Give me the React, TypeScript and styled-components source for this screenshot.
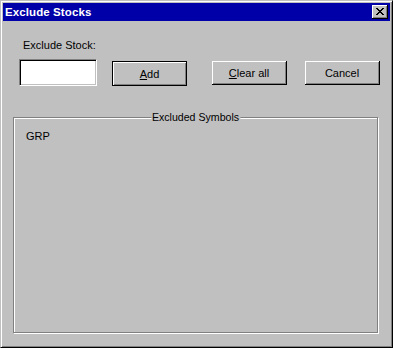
import React, { useState } from 'react';
import styled, { createGlobalStyle } from 'styled-components';

const GlobalStyle = createGlobalStyle`
  html, body {
    margin: 0;
    padding: 0;
    background: #000000;
  }
  body {
    font-family: "Liberation Sans", Arial, sans-serif;
    font-size: 11px;
  }
`;

// Win95 style window frame
const Window = styled.div`
  box-sizing: border-box;
  width: 393px;
  height: 348px;
  display: flex;
  flex-direction: column;
  background: #c0c0c0;
  border-top: 1px solid #c0c0c0;
  border-left: 1px solid #c0c0c0;
  border-right: 1px solid #000000;
  border-bottom: 1px solid #000000;
  box-shadow: inset 1px 1px 0 #ffffff, inset -1px -1px 0 #808080;
  padding: 2px;
`;

const TitleBar = styled.div`
  height: 18px;
  background: #0000a8;
  display: flex;
  align-items: center;
  justify-content: space-between;
  padding: 0 2px 0 2px;
`;

const Title = styled.span`
  color: #ffffff;
  font-family: "Liberation Sans", Arial, sans-serif;
  font-weight: bold;
  font-size: 11.5px;
  letter-spacing: 0.1px;
`;

const CloseButton = styled.button`
  box-sizing: border-box;
  width: 16px;
  height: 14px;
  padding: 0;
  background: #c0c0c0;
  border: none;
  border-right: 1px solid #000000;
  border-bottom: 1px solid #000000;
  box-shadow: inset 1px 1px 0 #ffffff, inset -1px -1px 0 #808080;
  display: flex;
  align-items: center;
  justify-content: center;
`;

const Body = styled.div`
  flex: 1;
  display: flex;
  flex-direction: column;
`;

const Label = styled.div`
  margin: 18px 0 0 20px;
  line-height: 13px;
  color: #000000;
`;

const ControlRow = styled.div`
  display: flex;
  align-items: flex-start;
  margin: 7px 0 0 16px;
`;

const TextInput = styled.input`
  box-sizing: border-box;
  width: 78px;
  height: 27px;
  margin: 0;
  padding: 2px 4px;
  background: #ffffff;
  border-top: 1px solid #808080;
  border-left: 1px solid #808080;
  border-right: 1px solid #ffffff;
  border-bottom: 1px solid #ffffff;
  box-shadow: inset 1px 1px 0 #000000, inset -1px -1px 0 #c0c0c0;
  font-family: "Liberation Sans", Arial, sans-serif;
  font-size: 11px;
  outline: none;
`;

const Button = styled.button<{ $offset: number; $default?: boolean }>`
  box-sizing: border-box;
  width: 75px;
  height: ${p => (p.$default ? 25 : 24)}px;
  margin: 2px 0 0 ${p => p.$offset}px;
  padding: 0;
  background: #c0c0c0;
  color: #000000;
  font-family: "Liberation Sans", Arial, sans-serif;
  font-size: 11px;
  border: ${p => (p.$default ? '1px solid #000000' : 'none')};
  border-right: 1px solid #000000;
  border-bottom: 1px solid #000000;
  box-shadow: inset 1px 1px 0 #ffffff, inset -1px -1px 0 #808080;
  display: flex;
  align-items: center;
  justify-content: center;
`;

const Mnemonic = styled.span`
  text-decoration: underline;
`;

const Group = styled.div`
  position: relative;
  box-sizing: border-box;
  width: 365px;
  height: 216px;
  margin: 31px 0 0 10px;
  border: 1px solid #808080;
  box-shadow: inset 1px 1px 0 #ffffff, 1px 1px 0 #ffffff;
  padding: 12px 0 0 12px;
`;

const Legend = styled.span`
  position: absolute;
  top: -7px;
  left: 50%;
  transform: translateX(-50%);
  background: #c0c0c0;
  padding: 0 1px;
  line-height: 13px;
  font-size: 10.6px;
  white-space: nowrap;
`;

const SymbolItem = styled.div`
  line-height: 13px;
  color: #000000;
`;

const CloseIcon = () => (
  <svg width="8" height="7" viewBox="0 0 8 7" shapeRendering="crispEdges">
    <path
      fill="#000000"
      d="M0 0h2v1h-2zM6 0h2v1h-2zM1 1h2v1h-2zM5 1h2v1h-2zM2 2h4v1h-4zM3 3h2v1h-2zM2 4h4v1h-4zM1 5h2v1h-2zM5 5h2v1h-2zM0 6h2v1h-2zM6 6h2v1h-2z"
    />
  </svg>
);

const App: React.FC = () => {
  const [symbol, setSymbol] = useState('');
  const [excluded, setExcluded] = useState<string[]>(['GRP']);

  const handleAdd = () => {
    const s = symbol.trim().toUpperCase();
    if (s && !excluded.includes(s)) setExcluded([...excluded, s]);
    setSymbol('');
  };

  return (
    <>
      <GlobalStyle />
      <Window>
        <TitleBar>
          <Title>Exclude Stocks</Title>
          <CloseButton aria-label="Close">
            <CloseIcon />
          </CloseButton>
        </TitleBar>
        <Body>
          <Label>Exclude Stock:</Label>
          <ControlRow>
            <TextInput value={symbol} onChange={e => setSymbol(e.target.value)} />
            <Button $offset={15} $default onClick={handleAdd}>
              <Mnemonic>A</Mnemonic>dd
            </Button>
            <Button $offset={25} onClick={() => setExcluded([])}>
              <Mnemonic>C</Mnemonic>lear all
            </Button>
            <Button $offset={18}>Cancel</Button>
          </ControlRow>
          <Group>
            <Legend>Excluded Symbols</Legend>
            {excluded.map(s => (
              <SymbolItem key={s}>{s}</SymbolItem>
            ))}
          </Group>
        </Body>
      </Window>
    </>
  );
};

export default App;
